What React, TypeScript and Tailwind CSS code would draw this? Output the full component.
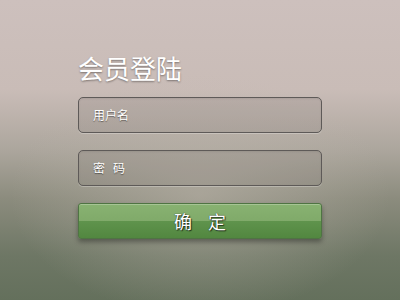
import React from "react";

export default function App() {
  return (
    <div className="relative w-[400px] h-[300px] overflow-hidden bg-[linear-gradient(180deg,#cdc0bd_0%,#c9bcb7_30%,#aca69d_50%,#8c8c7e_66%,#6e7765_85%,#64705c_100%)] font-['Noto_Sans_CJK_SC','Noto_Sans',sans-serif]">
      <div className="absolute inset-0 bg-[radial-gradient(ellipse_190px_120px_at_200px_195px,rgba(190,182,172,0.55),rgba(190,182,172,0)_100%)]" />
      <div className="relative flex flex-col pl-[78px] pt-[52px] w-[322px]">
        <div className="text-[26px] leading-[32px] text-white [text-shadow:0_1px_2px_rgba(0,0,0,0.4)]">会员登陆</div>
        <div className="mt-[13px] h-[36px] w-[244px] rounded-[5px] border border-[#5e5a58] bg-[rgba(90,85,82,0.12)] shadow-[0_1px_0_rgba(255,255,255,0.25),inset_0_1px_2px_rgba(0,0,0,0.08)] flex items-center pl-[14px]">
          <span className="text-[12px] text-white [text-shadow:0_1px_1px_rgba(0,0,0,0.45)]">用户名</span>
        </div>
        <div className="mt-[17px] h-[36px] w-[244px] rounded-[5px] border border-[#5e5a58] bg-[rgba(90,85,82,0.12)] shadow-[0_1px_0_rgba(255,255,255,0.25),inset_0_1px_2px_rgba(0,0,0,0.08)] flex items-center pl-[14px]">
          <span className="text-[12px] text-white [text-shadow:0_1px_1px_rgba(0,0,0,0.45)]">密&nbsp;&nbsp;&nbsp;码</span>
        </div>
        <div className="mt-[17px] h-[36px] w-[244px] rounded-[3px] border border-[#4f7443] bg-[linear-gradient(180deg,#88b271_0%,#80aa6a_50%,#5f934c_51%,#528740_100%)] shadow-[0_3px_5px_rgba(0,0,0,0.35),inset_0_1px_0_rgba(255,255,255,0.25)] flex items-center justify-center">
          <span className="text-[18px] text-white [text-shadow:0_0_1px_rgba(0,0,0,0.9),1px_1px_1px_rgba(0,0,0,0.6)] flex gap-[16px]">
            <span>确</span>
            <span>定</span>
          </span>
        </div>
      </div>
    </div>
  );
}
